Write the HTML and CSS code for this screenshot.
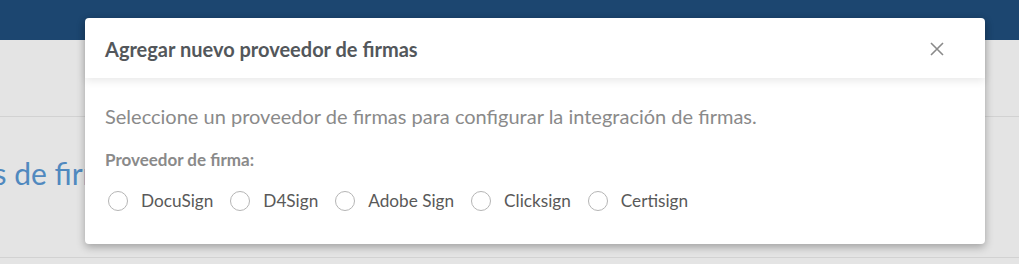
FILE: index.html
```html
<!DOCTYPE html>
<html lang="es">
<head>
<meta charset="utf-8">
<link rel="stylesheet" href="styles.css">
</head>
<body>
<div class="topbar"></div>
<div class="page">
  <div class="band"></div>
  <div class="section">
    <h2 class="page-title">Integraciones de firmas</h2>
  </div>
</div>

<div class="modal">
  <div class="modal-header">
    <h3 class="modal-title">Agregar nuevo proveedor de firmas</h3>
    <button class="close" aria-label="Cerrar">
      <svg width="14" height="14" viewBox="0 0 14 14"><path d="M1 1L13 13M13 1L1 13" stroke="#8a8a8a" stroke-width="1.6" fill="none"/></svg>
    </button>
  </div>
  <div class="modal-body">
    <p class="intro">Seleccione un proveedor de firmas para configurar la integración de firmas.</p>
    <div class="field-label">Proveedor de firma:</div>
    <div class="radios">
      <label class="radio"><span class="circle"></span>DocuSign</label>
      <label class="radio"><span class="circle"></span>D4Sign</label>
      <label class="radio"><span class="circle"></span>Adobe Sign</label>
      <label class="radio"><span class="circle"></span>Clicksign</label>
      <label class="radio"><span class="circle"></span>Certisign</label>
    </div>
  </div>
</div>
</body>
</html>
```

FILE: styles.css
```css
html, body {
  margin: 0;
  padding: 0;
}
body {
  width: 1019px;
  height: 264px;
  overflow: hidden;
  background: #e4e4e4;
  font-family: Lato, "Open Sans", sans-serif;
  position: relative;
}
.topbar {
  height: 40px;
  background: #1c4670;
}
.page {
  display: flex;
  flex-direction: column;
}
.band {
  height: 76px;
  border-bottom: 1px solid #d2d2d2;
}
.section {
  height: 140px;
  border-bottom: 1px solid #d2d2d2;
  display: flex;
  align-items: flex-start;
}
.page-title {
  margin: 38px 0 0 -170px;
  font-size: 30px;
  font-weight: 400;
  color: #5089bf;
  line-height: 36px;
  white-space: nowrap;
}
.modal {
  position: absolute;
  left: 85px;
  top: 18px;
  width: 900px;
  height: 226px;
  background: #fff;
  border-radius: 4px;
  box-shadow: 0 3px 9px rgba(0, 0, 0, 0.3);
  display: flex;
  flex-direction: column;
}
.modal-header {
  height: 60px;
  box-sizing: border-box;
  padding: 0 41px 0 20px;
  display: flex;
  align-items: center;
  justify-content: space-between;
  box-shadow: 0 3px 8px rgba(0, 0, 0, 0.09);
  border-radius: 4px 4px 0 0;
  position: relative;
  z-index: 1;
}
.modal-title {
  margin: 0;
  font-size: 20px;
  font-weight: 700;
  color: #53575b;
  padding-top: 1px;
}
.close {
  border: 0;
  background: none;
  padding: 0;
  width: 14px;
  height: 14px;
  display: flex;
  margin-top: 1px;
}
.modal-body {
  padding: 26px 20px 0 20px;
}
.intro {
  margin: 0;
  font-size: 20px;
  line-height: 24px;
  color: #8a8a8a;
}
.field-label {
  margin-top: 22px;
  font-size: 17px;
  font-weight: 700;
  color: #8a8a8a;
  line-height: 20px;
}
.radios {
  display: flex;
  gap: 17px;
  margin-top: 20px;
  padding-left: 3px;
}
.radio {
  display: flex;
  align-items: center;
  gap: 13px;
  font-size: 17.2px;
  color: #595959;
  line-height: 22px;
}
.circle {
  width: 18px;
  height: 18px;
  border: 1px solid #b5b5b5;
  border-radius: 50%;
  background: #fff;
}
```
